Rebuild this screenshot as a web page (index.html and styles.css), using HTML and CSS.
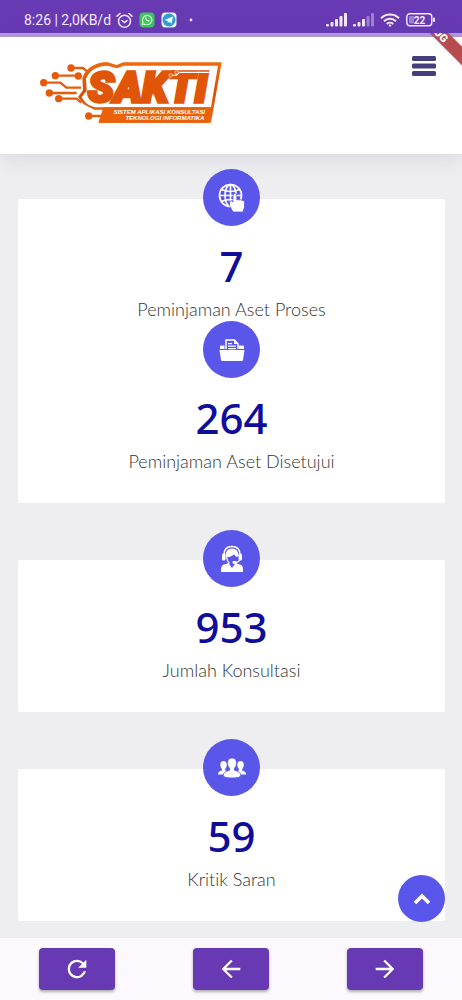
FILE: index.html
```html
<!DOCTYPE html>
<html lang="id">
<head>
<meta charset="utf-8">
<meta name="viewport" content="width=device-width, initial-scale=1">
<title>SAKTI</title>
<link rel="stylesheet" href="styles.css">
</head>
<body>
<div class="app">
  <div class="status">
    <span class="clock">8:26 | 2,0KB/d</span>
    <div class="notes">
      <svg width="17" height="17" viewBox="0 0 17 17" fill="none" stroke="#f0e2fb" stroke-width="1.6" stroke-linecap="round"><circle cx="8.500" cy="9.300" r="6"/><path d="M1 4.200 4 1.500M16 4.200 13 1.500M6 8.500l2.500 2 2.500-2"/></svg>
      <svg width="16" height="16" viewBox="0 0 16 16"><rect x=".5" y=".5" width="15" height="15" rx="4" fill="#3fc55c"/><path d="M3.300 12.800 4 10.200a4.700 4.700 0 1 1 1.800 1.900Z" fill="none" stroke="#d9f8df" stroke-width="1.100"/><path d="M6.200 5.500c-.7 1.700 2 4.600 4 4.200l.3-1-1.300-.7-.6.500-1.300-1.400.4-.6-.5-1.200Z" fill="#e6fbe9"/></svg>
      <svg width="16" height="16" viewBox="0 0 16 16"><rect x=".5" y=".5" width="15" height="15" rx="4" fill="#e8f5fc"/><circle cx="8" cy="8" r="6.500" fill="#2f9fd2"/><path d="m3.500 8 8.500-3.500-1.400 7-2.500-1.800-1.200 1.200-.4-2.200Z" fill="#fff"/></svg>
      <svg class="dot" width="4" height="4" viewBox="0 0 4 4"><circle cx="2" cy="2" r="1.400" fill="#f0e2fb"/></svg>
    </div>
    <div class="signals">
      <svg width="21" height="14" viewBox="0 0 21 14" fill="#f4e8fc"><rect y="11" width="3" height="2.500" rx="1"/><rect x="4.500" y="9" width="3" height="4.500" rx="1"/><rect x="9" y="6" width="3" height="7.500" rx="1"/><rect x="13.500" y="3" width="3" height="10.500" rx="1"/><rect x="18" width="3" height="13.500" rx="1"/></svg>
      <svg width="21" height="14" viewBox="0 0 21 14" fill="#f4e8fc"><rect y="11" width="3" height="2.500" rx="1"/><rect x="4.500" y="9" width="3" height="4.500" rx="1"/><rect x="9" y="6" width="3" height="7.500" rx="1"/><g opacity=".4"><rect x="13.500" y="3" width="3" height="10.500" rx="1"/><rect x="18" width="3" height="13.500" rx="1"/></g></svg>
      <svg width="20" height="14" viewBox="0 0 20 14" fill="none" stroke="#f4e8fc" stroke-width="2"><path d="M1 5.200a13 13 0 0 1 18 0M4 8.300a8.600 8.600 0 0 1 12 0"/><path d="M6.800 11a4.800 4.800 0 0 1 6.400 0"/><circle cx="10" cy="12.500" r=".8" fill="#f4e8fc" stroke-width="1"/></svg>
      <svg width="29" height="14" viewBox="0 0 29 14"><rect x=".8" y=".8" width="25" height="12" rx="3" fill="none" stroke="#f4e8fc" stroke-width="1.400"/><rect x="3" y="3" width="5" height="7.600" rx="1" fill="#f4e8fc" opacity=".4"/><rect x="27" y="4.500" width="2" height="4.500" rx="1" fill="#f4e8fc"/><text x="13.500" y="10.500" class="charge">22</text></svg>
    </div>
  </div>
  <header class="header">
    <svg class="logo" width="200" height="85" viewBox="0 0 600 255" role="img" aria-label="SAKTI">
      <defs><linearGradient id="ember" x1="0" y1="0" x2="0" y2="1"><stop offset="0" stop-color="#f06a0c"/><stop offset=".5" stop-color="#d94e08"/><stop offset="1" stop-color="#ee690c"/></linearGradient></defs>
      <g fill="none" stroke="#e65b0b" stroke-width="7"><path d="M123 54h36l12 10M76 77h70M41 98h50l18 15h44M58 129h82M86 146h54l14 12M176 198h38"/></g>
      <g fill="#e65b0b"><circle cx="123" cy="54" r="11"/><circle cx="76" cy="77" r="11"/><circle cx="145" cy="78" r="11"/><circle cx="41" cy="98" r="11"/><circle cx="58" cy="129" r="11"/><circle cx="86" cy="146" r="11"/><circle cx="176" cy="198" r="11"/></g>
      <path d="M157 83C170 48 205 36 231 36l29 9 20-8h295l-32 181H205l13-39h-25l-32-16-17-22 15-20Z" fill="url(#ember)"/>
      <path d="M168 86C180 58 205 47 232 47l29 8 20-8h283l-21 125H206c-24 0-41-11-51-31l15-19Z" fill="#fff"/>
      <path d="M222 172h322l-8 46H207Z" fill="#e9610a"/>
      <text x="174" y="156" class="wordmark">SAKTI</text>
      <path d="M422 76h16l10-9h107" fill="none" stroke="#fff" stroke-width="4"/>
      <circle cx="422" cy="76" r="5" fill="#e65b0b" stroke="#fff" stroke-width="2"/><circle cx="440" cy="67" r="5" fill="#e65b0b" stroke="#fff" stroke-width="2"/>
      <text x="525" y="191" class="tagline">SISTEM APLIKASI KONSULTASI</text>
      <text x="523" y="210" class="tagline">TEKNOLOGI INFORMATIKA</text>
    </svg>
    <button class="menu" aria-label="Menu"><svg width="26" height="22" viewBox="0 0 26 22" fill="#443e7b"><rect x="1" y="1" width="24" height="5" rx="1.500"/><rect x="1" y="8.500" width="24" height="5" rx="1.500"/><rect x="1" y="16" width="24" height="5" rx="1.500"/></svg></button>
    <svg class="debug" width="40" height="40" viewBox="0 0 40 40"><path d="M7-10 47 30" stroke="#777" stroke-width="16" opacity=".14"/><path d="M7-10 47 30" stroke="#b64c4e" stroke-width="13"/><text transform="translate(12 -5) rotate(45)" y="4" class="debug-text">DEBUG</text></svg>
  </header>
  <main class="main">
    <section class="card">
      <div class="stat">
        <div class="badge"><svg width="28" height="30" viewBox="0 0 28 30" fill="none" stroke="#fff" stroke-width="1.700"><circle cx="12.500" cy="12.500" r="11"/><ellipse cx="12.500" cy="12.500" rx="5.500" ry="11"/><path d="M12.500 1.500v22M1.500 12.500h22M3.500 6.500q9 4 18 0M3.500 18.500q9-4 18 0"/><path d="M15 12.500q0-2 1.900-2t1.900 2v4.500q1.400-1 2.500 0 1.400-.8 2.500.3 2.700-.6 2.700 1.700v5l-1.500 5h-10l-3.500-6.500v-4l2-.7 1.500 1.200Z" fill="#fff" stroke="#5956e9" stroke-width=".8"/></svg></div>
        <strong class="number">7</strong><span class="label">Peminjaman Aset Proses</span>
      </div>
      <div class="stat">
        <div class="badge"><svg width="26" height="24" viewBox="0 0 26 24" fill="#fff"><path d="M1 11V8.500q0-1 1-1h3.500V11ZM20 11V7.500h4q1 0 1 1V11Z"/><path d="M7 11V2h8.500l3.500 4v5" fill="none" stroke="#fff" stroke-width="1.500"/><path d="M15 1.500V6h4.500ZM9 5h4v1.200H9ZM9 7.500h8v1.200H9ZM9 10h8v1.200H9ZM.5 12h25L24 22q-.2 1-1.300 1H3.300Q2.200 23 2 22Z"/></svg></div>
        <strong class="number">264</strong><span class="label">Peminjaman Aset Disetujui</span>
      </div>
    </section>
    <section class="card">
      <div class="stat">
        <div class="badge"><svg width="24" height="28" viewBox="0 0 24 28" fill="#fff"><path d="M5.500 11q0-7.500 6.500-7.500t6.500 7.500l-1.500 1q-2-.5-3-2.800Q11.500 12 7 12Z"/><path d="M4 10q0-8.500 8-8.500T20 10M20 14q-.5 3.500-6 3.500" fill="none" stroke="#fff" stroke-width="1.500"/><path d="M6.500 11q.5 5.500 3 7.200" fill="none" stroke="#fff" stroke-width="1.200"/><rect x="2" y="8.500" width="3.500" height="7" rx="1.500"/><rect x="18.500" y="8.500" width="3.500" height="7" rx="1.500"/><rect x="12.500" y="16" width="4" height="2.800" rx="1.300"/><path d="M1 27v-3q0-4 4-4.700l3.500-1.300 3.500 5 3.500-5 3.500 1.300q4 .7 4 4.700v3Z"/></svg></div>
        <strong class="number">953</strong><span class="label">Jumlah Konsultasi</span>
      </div>
    </section>
    <section class="card">
      <div class="stat">
        <div class="badge"><svg width="30" height="22" viewBox="0 0 30 22" fill="#fff"><path id="person" d="M6.500 4q3.300 0 3.300 4 0 2.500-1.600 4v1.500q4 1 4 4H1q0-3.200 3.900-4V12Q3.300 10.500 3.300 8q0-4 3.200-4Z"/><use href="#person" x="17"/><path d="M15 1q4.500 0 4.500 5.200 0 3.300-2 5v2q6.200 1.500 6.200 5.300 0 2.500-8.700 2.500t-8.700-2.500q0-3.800 6.200-5.300v-2q-2-1.700-2-5Q10.500 1 15 1Z" stroke="#5956e9" stroke-width=".8"/></svg></div>
        <strong class="number">59</strong><span class="label">Kritik Saran</span>
      </div>
    </section>
    <button class="to-top" aria-label="Ke atas"><svg width="18" height="14" viewBox="0 0 18 14" fill="none" stroke="#fff" stroke-width="3.600"><path d="m2 11 7-7 7 7"/></svg></button>
  </main>
  <nav class="toolbar">
    <button class="tool" aria-label="Muat ulang"><svg width="28" height="28" viewBox="0 0 24 24" fill="#fff"><path d="M17.650 6.350A7.950 7.950 0 0 0 12 4a8 8 0 1 0 7.730 10h-2.080A6 6 0 1 1 12 6c1.660 0 3.140.69 4.220 1.780L13 11h7V4Z"/></svg></button>
    <button class="tool" aria-label="Kembali"><svg width="28" height="28" viewBox="0 0 24 24" fill="#fff"><path d="M20 11H7.830l5.590-5.590L12 4l-8 8 8 8 1.410-1.410L7.830 13H20Z"/></svg></button>
    <button class="tool" aria-label="Maju"><svg width="28" height="28" viewBox="0 0 24 24" fill="#fff"><path d="m12 4-1.410 1.410L16.170 11H4v2h12.170l-5.580 5.590L12 20l8-8Z"/></svg></button>
  </nav>
</div>
</body>
</html>
```
FILE: styles.css
```css
* { box-sizing: border-box; }
body { margin: 0; font-family: "Lato", sans-serif; }
button { border: 0; padding: 0; cursor: pointer; }
svg { display: block; }

.app { min-height: 100vh; display: flex; flex-direction: column; background: #fbf9fd; }

.status {
  display: flex;
  align-items: center;
  height: 37px;
  padding: 8px 27px 1px 24px;
  background: #673ab4;
  border-bottom: 4px solid #b39bd9;
}
.clock { color: #f4e8fc; font: 14px/20px "Roboto", sans-serif; white-space: nowrap; }
.notes { display: flex; align-items: center; gap: 6px; margin-left: 5px; }
.dot { margin-left: 6px; }
.signals { display: flex; align-items: center; gap: 6px; margin-left: auto; }
.charge { font: 700 10px "Roboto", sans-serif; fill: #f4e8fc; text-anchor: middle; }

.header {
  position: relative;
  z-index: 1;
  display: flex;
  justify-content: space-between;
  align-items: flex-start;
  padding: 13px 25px 19px 30px;
  background: #fff;
  box-shadow: 0 4px 20px rgba(60, 60, 80, 0.12);
}
.wordmark {
  font: italic 900 128px "Roboto", sans-serif;
  fill: #e05508;
  stroke: #e05508;
  stroke-width: 10px;
}
.tagline { font: italic 700 18px "Liberation Sans", Arial, sans-serif; fill: #fff; text-anchor: end; }
.menu { margin-top: 5px; background: none; }
.debug { position: absolute; top: -4px; right: 0; overflow: hidden; }
.debug-text { font: 900 11px "Roboto", sans-serif; fill: #fff; text-anchor: middle; }

.main {
  position: relative;
  flex: 1;
  display: flex;
  flex-direction: column;
  gap: 57px;
  padding: 45px 17px 17px 18px;
  background: #eeeef1;
}
.card { background: #fff; border-radius: 2px; }
.stat { display: flex; flex-direction: column; align-items: center; padding-bottom: 30px; }
.badge {
  position: relative;
  display: grid;
  place-items: center;
  width: 57px;
  height: 57px;
  margin-top: -30px;
  border-radius: 50%;
  background: #5956e9;
}
.number { margin-top: 13px; color: #110d9b; font: 500 42px/54px "Noto Sans", "Open Sans", sans-serif; }
.label {
  margin-top: 4px;
  color: #333;
  font-size: 18px;
  line-height: 24px;
  font-weight: 300;
  font-variant-ligatures: none;
}
.to-top {
  position: absolute;
  right: 17px;
  bottom: 16px;
  display: grid;
  place-items: center;
  width: 47px;
  height: 47px;
  border-radius: 50%;
  background: #5956ec;
}

.toolbar { display: flex; justify-content: space-around; padding: 10px 0; background: #fbf9fd; }
.tool {
  display: grid;
  place-items: center;
  width: 76px;
  height: 42px;
  border-radius: 4px;
  background: #673ab4;
  box-shadow: 0 2px 3px rgba(0, 0, 0, 0.3);
}
```
